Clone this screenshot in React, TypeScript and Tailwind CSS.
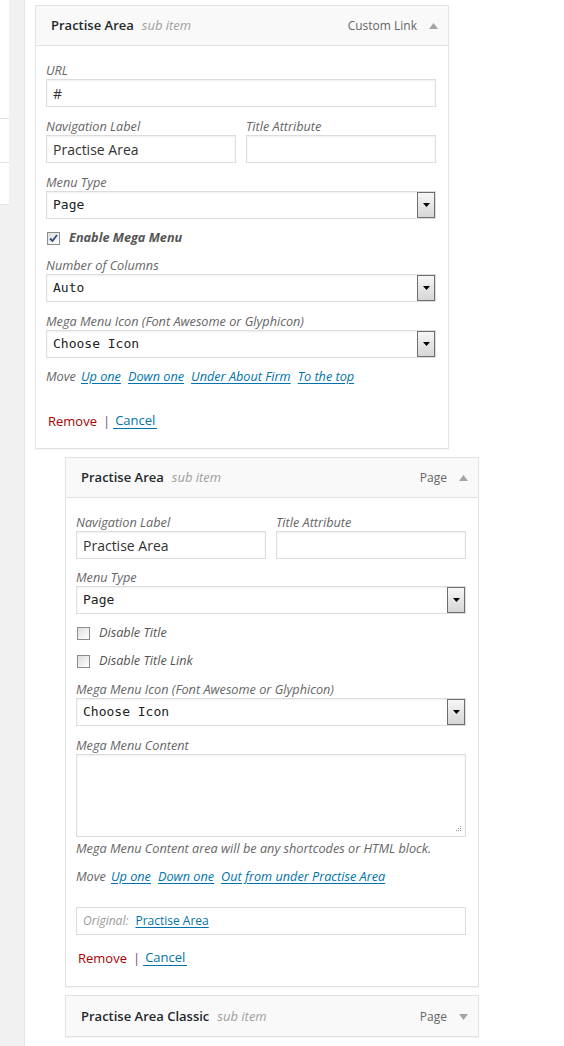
import type { ReactNode } from "react";

const sans = "font-['Open_Sans',sans-serif]";

function Caret({ up }: { up: boolean }) {
  return (
    <svg width="9" height="6" viewBox="0 0 9 6" aria-hidden="true">
      <path d={up ? "M4.5 0 9 6H0Z" : "M0 0h9L4.5 6Z"} fill="#a0a5aa" />
    </svg>
  );
}

function PanelHeader({ title, type, open }: { title: string; type: string; open: boolean }) {
  return (
    <div
      className={`flex h-[40px] items-center bg-[#f9f9f9] pl-[15px] pr-[10px] pt-[1px] ${open ? "border-b border-[#e2e2e2]" : ""}`}
    >
      <span className="text-[13px] font-semibold text-[#23282d]">{title}</span>
      <span className="ml-[8px] text-[13px] italic text-[#a0a0a0]">sub item</span>
      <span className="ml-auto text-[12px] text-[#666]">{type}</span>
      <span className="ml-[12px] flex items-center">
        <Caret up={open} />
      </span>
    </div>
  );
}

function Label({ children }: { children: ReactNode }) {
  return <div className="h-[18px] whitespace-nowrap text-[12.7px] leading-[18px] italic text-[#666]">{children}</div>;
}

function TextInput({ value }: { value?: string }) {
  return (
    <div className="flex h-[28px] items-center border border-[#ddd] bg-white px-[6px] text-[14px] text-[#333] shadow-[inset_0_1px_2px_rgba(0,0,0,0.07)]">
      {value}
    </div>
  );
}

function Select({ value }: { value: string }) {
  return (
    <div className="flex h-[28px] items-stretch border border-[#ddd] bg-white shadow-[inset_0_1px_2px_rgba(0,0,0,0.07)]">
      <span className="flex flex-1 items-center pl-[6px] font-['DejaVu_Sans_Mono',monospace] text-[13px] text-[#222]">
        {value}
      </span>
      <span className="flex w-[18px] items-center justify-center border border-[#6e6e6e] bg-gradient-to-b from-[#f6f6f6] to-[#d6d6d6]">
        <svg width="7" height="4" viewBox="0 0 7 4" aria-hidden="true">
          <path d="M0 0h7L3.5 4Z" fill="#000" />
        </svg>
      </span>
    </div>
  );
}

function Field({ label, children, className = "" }: { label: string; children: ReactNode; className?: string }) {
  return (
    <div className={className}>
      <Label>{label}</Label>
      {children}
    </div>
  );
}

function Checkbox({ label, checked, bold, className = "" }: { label: string; checked?: boolean; bold?: boolean; className?: string }) {
  return (
    <div className={`flex h-[18px] items-center ${className}`}>
      <span className="ml-[1px] flex h-[13px] w-[13px] items-center justify-center border border-[#8c8c8c] bg-gradient-to-br from-[#dedede] to-white">
        {checked && (
          <svg width="9" height="9" viewBox="0 0 9 9" aria-hidden="true">
            <path d="M1 4.5 3.5 7 8 1" stroke="#2c4a86" strokeWidth="1.8" fill="none" />
          </svg>
        )}
      </span>
      <span className={`ml-[9px] text-[12.7px] italic text-[#555] ${bold ? "font-bold" : ""}`}>{label}</span>
    </div>
  );
}

function MoveLine({ links, className = "" }: { links: string[]; className?: string }) {
  return (
    <div className={`flex h-[18px] items-center gap-[7px] text-[12.7px] leading-[18px] italic ${className}`}>
      <span className="-mr-[2px] text-[#666]">Move</span>
      {links.map((l) => (
        <a key={l} href="#" className="text-[#0073aa] underline underline-offset-2">
          {l}
        </a>
      ))}
    </div>
  );
}

function Actions({ className = "" }: { className?: string }) {
  return (
    <div className={`flex h-[18px] items-center text-[13px] leading-[18px] ${className}`}>
      <a href="#" className="ml-[2px] text-[#a00]">
        Remove
      </a>
      <span className="ml-[6px] mr-[3px] text-[#82498c]">|</span>
      <a href="#" className="border-b border-[#0073aa] px-[2px] leading-[15px] text-[#0073aa]">
        Cancel
      </a>
    </div>
  );
}

function Panel({ className = "", children }: { className?: string; children: ReactNode }) {
  return (
    <div className={`w-[414px] border border-[#e2e2e2] bg-white shadow-[0_1px_1px_rgba(0,0,0,0.04)] ${className}`}>
      {children}
    </div>
  );
}

export default function App() {
  return (
    <div className={`flex min-h-[1046px] w-[564px] bg-white ${sans}`}>
      <div className="w-[25px] shrink-0 border-r border-[#e5e5e5] bg-[#f1f1f1]">
        <div className="w-[9px] bg-white">
          <div className="h-[119px] border-b border-[#e2e2e2]" />
          <div className="h-[44px] border-b border-[#e2e2e2]" />
          <div className="h-[42px] border-b border-[#e2e2e2]" />
        </div>
      </div>

      <div className="flex-1 pt-[5px]">
        <Panel className="ml-[10px]">
          <PanelHeader title="Practise Area" type="Custom Link" open />
          <div className="pb-[18px] pl-[10px] pr-[12px] pt-[15px]">
            <Field label="URL" className="mb-[10px]">
              <TextInput value="#" />
            </Field>
            <div className="mb-[10px] grid grid-cols-2 gap-[10px]">
              <Field label="Navigation Label">
                <TextInput value="Practise Area" />
              </Field>
              <Field label="Title Attribute">
                <TextInput />
              </Field>
            </div>
            <Field label="Menu Type">
              <Select value="Page" />
            </Field>
            <Checkbox label="Enable Mega Menu" checked bold className="mt-[10px]" />
            <Field label="Number of Columns" className="mt-[9px]">
              <Select value="Auto" />
            </Field>
            <Field label="Mega Menu Icon (Font Awesome or Glyphicon)" className="mt-[10px]">
              <Select value="Choose Icon" />
            </Field>
            <MoveLine links={["Up one", "Down one", "Under About Firm", "To the top"]} className="mt-[9px]" />
            <Actions className="mt-[27px]" />
          </div>
        </Panel>

        <Panel className="ml-[40px] mt-[8px]">
          <PanelHeader title="Practise Area" type="Page" open />
          <div className="pb-[19px] pl-[10px] pr-[12px] pt-[15px]">
            <div className="mb-[9px] grid grid-cols-2 gap-[10px]">
              <Field label="Navigation Label">
                <TextInput value="Practise Area" />
              </Field>
              <Field label="Title Attribute">
                <TextInput />
              </Field>
            </div>
            <Field label="Menu Type">
              <Select value="Page" />
            </Field>
            <Checkbox label="Disable Title" className="mt-[10px]" />
            <Checkbox label="Disable Title Link" className="mt-[10px]" />
            <Field label="Mega Menu Icon (Font Awesome or Glyphicon)" className="mt-[10px]">
              <Select value="Choose Icon" />
            </Field>
            <Field label="Mega Menu Content" className="mt-[10px]">
              <div className="relative h-[83px] border border-[#ddd] bg-white shadow-[inset_0_1px_2px_rgba(0,0,0,0.07)]">
                <svg className="absolute bottom-[3px] right-[3px]" width="7" height="7" viewBox="0 0 7 7" aria-hidden="true">
                  <g fill="#9a9a9a">
                    <rect x="5" y="0" width="1" height="1" />
                    <rect x="3" y="2" width="1" height="1" />
                    <rect x="5" y="2" width="1" height="1" />
                    <rect x="1" y="4" width="1" height="1" />
                    <rect x="3" y="4" width="1" height="1" />
                    <rect x="5" y="4" width="1" height="1" />
                  </g>
                </svg>
              </div>
            </Field>
            <div className="mt-[2px] h-[18px] text-[12.7px] leading-[18px] italic text-[#666]">
              Mega Menu Content area will be any shortcodes or HTML block.
            </div>
            <MoveLine links={["Up one", "Down one", "Out from under Practise Area"]} className="mt-[10px]" />
            <div className="mt-[22px] flex h-[28px] items-center border border-[#ddd] px-[6px] text-[12px]">
              <span className="italic text-[#999]">Original:</span>
              <a href="#" className="ml-[7px] text-[#0073aa] underline underline-offset-2">
                Practise Area
              </a>
            </div>
            <Actions className="mt-[14px]" />
          </div>
        </Panel>

        <Panel className="ml-[40px] mt-[8px]">
          <PanelHeader title="Practise Area Classic" type="Page" open={false} />
        </Panel>
      </div>
    </div>
  );
}
